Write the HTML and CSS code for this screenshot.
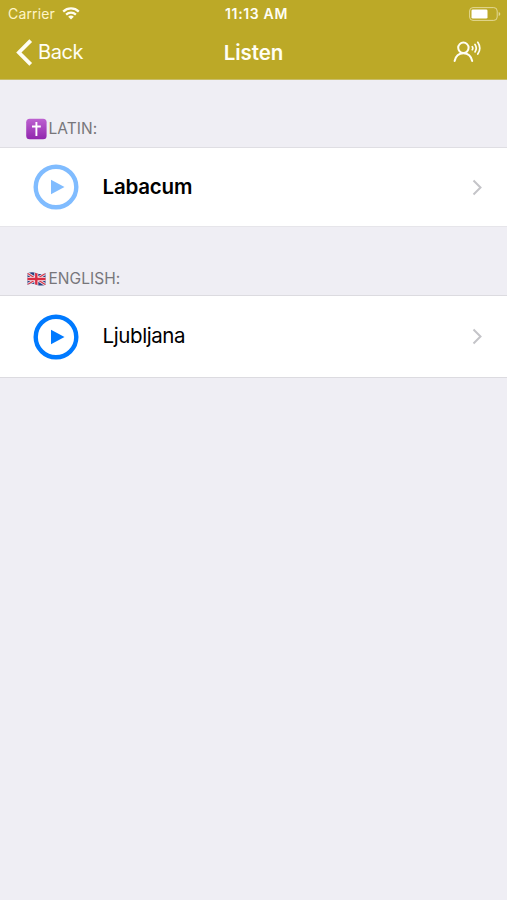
FILE: index.html
```html
<!DOCTYPE html>
<html lang="en">
<head>
<meta charset="utf-8">
<title>Listen</title>
<link rel="stylesheet" href="styles.css">
</head>
<body>
<header class="top">
  <div class="status">
    <div class="carrier"><span class="carrier-name">Carrier</span>
      <svg class="wifi" width="18" height="13" viewBox="0 0 18 13" fill="none" stroke="#fffdf0" stroke-width="2.3"><path d="M1.2 4.6C5.6.4 12.4.4 16.8 4.6M4.1 7.6c2.8-2.6 7-2.6 9.8 0"/><path d="M6.2 9.7c1.6-1.5 4-1.5 5.6 0L9 12.6z" fill="#fffdf0" stroke="none"/></svg>
    </div>
    <time class="clock">11:13 AM</time>
    <svg class="battery" width="32" height="14" viewBox="0 0 32 14"><rect x=".6" y=".6" width="27.6" height="12.8" rx="3.4" fill="none" stroke="#e3d894"/><rect x="2.5" y="2.5" width="16" height="9" rx="1.3" fill="#fff"/><path d="M29.7 5v4q1.6-.6 1.6-2t-1.6-2z" fill="#e3d894"/></svg>
  </div>
  <nav class="nav">
    <a class="back"><svg width="17" height="27" viewBox="0 0 17 27" fill="none" stroke="#fffef4" stroke-width="3.8"><path d="M14.7 1.7 2.9 13.5l11.8 11.8"/></svg><span class="back-label">Back</span></a>
    <h1 class="title">Listen</h1>
    <svg class="speaker" width="30" height="24" viewBox="0 0 30 24" fill="none" stroke="#fffef4" stroke-width="2" stroke-linecap="round"><circle cx="11.4" cy="7.8" r="5.2"/><path d="M2.600 21c1-4.800 4.300-7.800 8.800-7.800s7.800 3 8.800 7.800"/><path d="M20.300 6.700q1 1.500 0 3M23 4.500q2.500 3.700 0 7.400M25.800 2.300q4 5.900 0 11.800" stroke-width="1.700"/></svg>
  </nav>
</header>
<main>
  <section>
    <h2 class="heading">
      <svg class="emoji" width="22" height="22" viewBox="0 0 22 22"><defs><linearGradient id="purple" x2="0" y2="1"><stop stop-color="#bd61d0"/><stop offset="1" stop-color="#9127ae"/></linearGradient></defs><rect x="1.200" y=".8" width="20.400" height="20.400" rx="3.500" fill="url(#purple)"/><path d="M11.400 4v14M7 8.500h8.800" stroke="#fff" stroke-width="1.900"/></svg>
      <span class="latin">LATIN:</span>
    </h2>
    <div class="row">
      <svg class="play soft" width="46" height="46" viewBox="0 0 46 46"><circle cx="23" cy="23" r="20.300" fill="none" stroke="currentColor" stroke-width="4.400"/><path d="M18 15.700v14.600L31.500 23z" fill="currentColor"/></svg>
      <span class="name current">Labacum</span>
      <svg class="chevron" width="11" height="17" viewBox="0 0 11 17" fill="none" stroke="#c4c4c8" stroke-width="2"><path d="m1.500 1.500 7 7-7 7"/></svg>
    </div>
  </section>
  <section>
    <h2 class="heading second">
      <svg class="emoji" width="22" height="22" viewBox="0 0 22 22"><defs><clipPath id="flag"><path d="M2.500 5.200q4.500-1.700 9 0t9 0v11.500q-4.500 1.700-9 0t-9 0z"/></clipPath></defs><g clip-path="url(#flag)"><path fill="#294180" d="M0 0h22v22H0z"/><path d="m2 5 19 12M2 17 21 5" stroke="#e9e2ec" stroke-width="2.800"/><path d="m2 5 19 12M2 17 21 5" stroke="#d73849" stroke-width="1.100"/><path d="M11.300 3v16M1 11h20" stroke="#f5e9ef" stroke-width="4"/><path d="M11.300 3v16M1 11h20" stroke="#d92d43" stroke-width="2.400"/></g></svg>
      <span class="english">ENGLISH:</span>
    </h2>
    <div class="row last">
      <svg class="play" width="46" height="46" viewBox="0 0 46 46"><circle cx="23" cy="23" r="20.300" fill="none" stroke="currentColor" stroke-width="4.400"/><path d="M18 15.700v14.600L31.500 23z" fill="currentColor"/></svg>
      <span class="name">Ljubljana</span>
      <svg class="chevron" width="11" height="17" viewBox="0 0 11 17" fill="none" stroke="#c4c4c8" stroke-width="2"><path d="m1.500 1.500 7 7-7 7"/></svg>
    </div>
  </section>
</main>
</body>
</html>
```
FILE: styles.css
```css
* { box-sizing: border-box; }
body {
  margin: 0;
  min-height: 900px;
  background: #efeef4;
  font-family: Inter, "Liberation Sans", sans-serif;
  color: #000;
}
svg { display: block; flex: none; }
h1, h2 { margin: 0; }
.top {
  height: 80px;
  background: #bca927;
  border-bottom: 1px solid #c9bd69;
  color: #fffef4;
}
.status, .nav {
  display: grid;
  grid-template-columns: 1fr auto 1fr;
  align-items: center;
}
.status {
  height: 27px;
  padding: 0 6px 0 8px;
  font-size: 14px;
  line-height: 27px;
}
.carrier { display: flex; align-items: center; gap: 7px; }
.carrier-name { width: 47px; white-space: nowrap; letter-spacing: .15px; color: #fff5c8; }
.clock { font-weight: 600; letter-spacing: .65px; margin-left: 4px; }
.battery { justify-self: end; }
.nav { height: 50px; padding: 0 16px; }
.back { display: flex; align-items: center; gap: 5px; }
.back-label { font-size: 20px; letter-spacing: -.4px; }
.title { font-size: 20.5px; font-weight: 600; letter-spacing: -.1px; }
.speaker { justify-self: end; margin-right: 9px; }
.heading {
  height: 67px;
  padding: 38px 0 0 25px;
  display: flex;
  align-items: flex-start;
  gap: 1.5px;
  font-size: 15.5px;
  font-weight: 400;
  line-height: 22px;
  letter-spacing: .05px;
  color: #77767b;
}
.heading.second { height: 68px; padding-top: 41px; }
.row {
  height: 80px;
  display: flex;
  align-items: center;
  padding: 0 24px 0 33px;
  background: #fff;
  border-top: 1px solid #dfdee3;
  border-bottom: 1px solid #e6e5ea;
}
.row.last { height: 83px; border-color: #dcdbe0; }
.play { color: #007aff; }
.play.soft { color: #80bcff; }
.name { flex: 1; margin-left: 23.500px; font-size: 20.5px; line-height: 26px; padding-bottom: 1px; letter-spacing: -.4px; }
.current { font-weight: 600; letter-spacing: -.2px; }
```
